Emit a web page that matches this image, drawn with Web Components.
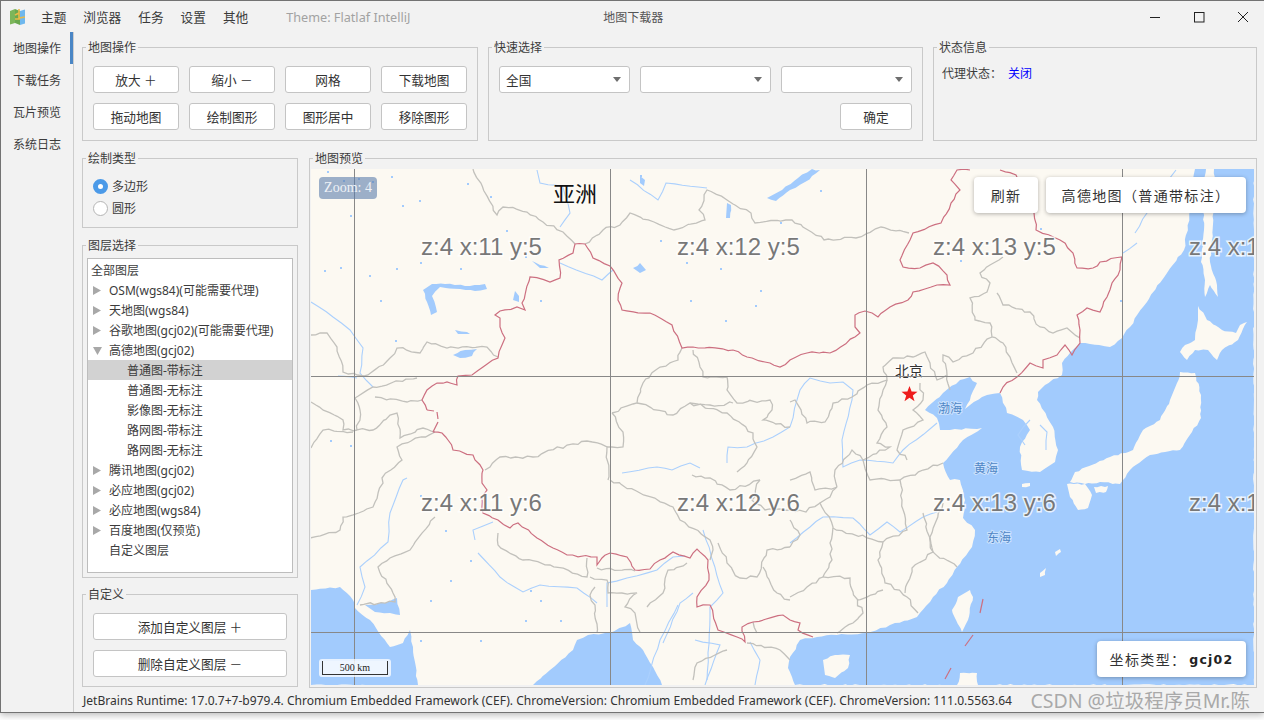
<!DOCTYPE html>
<html lang="zh">
<head>
<meta charset="utf-8">
<title>地图下载器</title>
<style>
  html, body { margin: 0; padding: 0; background: #fff; height: 100%; }
  body { font: 12.6px "Noto Sans", "Noto Sans CJK SC", sans-serif; color: #333; overflow: hidden; }
</style>
</head>
<body>
<app-window>
  <title-bar></title-bar>
  <div slot="tabs">
    <side-tab active>地图操作</side-tab>
    <side-tab>下载任务</side-tab>
    <side-tab>瓦片预览</side-tab>
    <side-tab>系统日志</side-tab>
  </div>
  <top-row slot="main">
    <group-box legend="地图操作">
      <button-grid>
        <ui-button>放大 ＋</ui-button>
        <ui-button>缩小 －</ui-button>
        <ui-button>网格</ui-button>
        <ui-button>下载地图</ui-button>
        <ui-button>拖动地图</ui-button>
        <ui-button>绘制图形</ui-button>
        <ui-button>图形居中</ui-button>
        <ui-button>移除图形</ui-button>
      </button-grid>
    </group-box>
    <group-box legend="快速选择">
      <quick-select></quick-select>
    </group-box>
    <group-box legend="状态信息" pad="9px 8px">
      <proxy-status></proxy-status>
    </group-box>
  </top-row>
  <lower-row slot="main">
    <left-column>
      <group-box legend="绘制类型" pad="8px 10px">
        <ui-radio checked>多边形</ui-radio>
        <ui-radio>圆形</ui-radio>
      </group-box>
      <group-box legend="图层选择" pad="4px" grow style="margin-top:1px">
        <layer-tree></layer-tree>
      </group-box>
      <group-box legend="自定义" pad="10px 10px 9px">
        <ui-button block>添加自定义图层 ＋</ui-button>
        <ui-button block>删除自定义图层 －</ui-button>
      </group-box>
    </left-column>
    <group-box legend="地图预览" pad="2px 2px 2px 1px" grow>
      <map-view></map-view>
    </group-box>
  </lower-row>
  <status-bar slot="main"></status-bar>
</app-window>

<script>
class AppWindow extends HTMLElement {
  constructor() {
    super();
    this.attachShadow({ mode: 'open' });
    this.shadowRoot.innerHTML = `
      <style>
        :host {
          display: flex; flex-direction: column; box-sizing: border-box;
          width: 1264px; height: 713px; background: #f2f2f2;
          border: 1px solid #737373; border-right: 0;
          box-shadow: 0 2px 7px rgba(0,0,0,.28);
        }
        .body { display: flex; flex: 1; min-height: 0; }
        .tabs { width: 72px; border-right: 1px solid #cdcdcd; flex: none; }
        .main { flex: 1; display: flex; flex-direction: column; padding: 6px 7px 0 8px; min-width: 0; }
      </style>
      <slot></slot>
      <div class="body">
        <div class="tabs"><slot name="tabs"></slot></div>
        <div class="main"><slot name="main"></slot></div>
      </div>`;
  }
}

class TitleBar extends HTMLElement {
  constructor() {
    super();
    this.attachShadow({ mode: 'open' });
    this.shadowRoot.innerHTML = `
      <style>
        :host { display: flex; align-items: center; height: 31px; flex: none; font-size: 12.67px; color: #3a3a3a; }
        svg.logo { margin: 0 16px 0 9px; flex: none; }
        .menu { display: flex; gap: 17px; }
        .theme { margin-left: 38px; color: #a2a2a2; width: 317px; }
        .title { color: #555; font-size: 12px; }
        .controls { margin-left: auto; margin-right: -1px; display: flex; }
        .controls div { width: 44px; height: 31px; display: flex; align-items: center; justify-content: center; }
      </style>
      <svg class="logo" width="15" height="16" viewBox="0 0 15 16">
        <path d="M0 2 5 0V14L0 15.5Z" fill="#7cb65a"/>
        <path d="M5 0 10 2V16L5 14Z" fill="#6aa84f"/>
        <path d="M10 2 15 .5V14.5L10 16Z" fill="#6fb8ee"/>
        <path d="M5 6 9 4M9 0V9L15 8M5 10H10" stroke="#e9b949" stroke-width="1.6" fill="none"/>
      </svg>
      <div class="menu"><span>主题</span><span>浏览器</span><span>任务</span><span>设置</span><span>其他</span></div>
      <div class="theme">Theme: Flatlaf IntelliJ</div>
      <div class="title">地图下载器</div>
      <div class="controls">
        <div><svg width="12" height="12" viewBox="0 0 12 12"><path d="M1 6.5H11" stroke="#222" fill="none"/></svg></div>
        <div><svg width="12" height="12" viewBox="0 0 12 12"><rect x="1.5" y="1.5" width="9.5" height="9.5" stroke="#222" fill="none"/></svg></div>
        <div><svg width="12" height="12" viewBox="0 0 12 12"><path d="M1 1 11 11M11 1 1 11" stroke="#222" fill="none"/></svg></div>
      </div>`;
  }
}

class SideTab extends HTMLElement {
  constructor() {
    super();
    this.attachShadow({ mode: 'open' });
    this.shadowRoot.innerHTML = `
      <style>
        :host { display: flex; align-items: center; justify-content: center; height: 32px; box-sizing: border-box; font-size: 12px; color: #3c3c3c; padding-right: 0; }
        :host([active]) { box-shadow: inset -3px 0 0 #4a86c5; }
      </style>
      <slot></slot>`;
  }
}

class GroupBox extends HTMLElement {
  constructor() {
    super();
    this.attachShadow({ mode: 'open' });
    const pad = this.getAttribute('pad') || '10px';
    const parts = pad.split(' ');
    const padLeft = parseInt(parts[3] || parts[1] || parts[0]);
    this.shadowRoot.innerHTML = `
      <style>
        :host { display: block; min-width: 0; }
        :host([grow]) { flex: 1; min-height: 0; }
        fieldset {
          margin: 0; height: 100%; box-sizing: border-box; min-width: 0;
          border: 1px solid #c9c9c9; padding: ${pad}; display: flex; flex-direction: column;
        }
        legend {
          font-size: 12px; height: 18px; line-height: 20px; color: #3c3c3c; padding: 0 2px;
          margin-left: ${3 - padLeft}px;
        }
      </style>
      <fieldset>
        <legend>${this.getAttribute('legend')}</legend>
        <slot></slot>
      </fieldset>`;
  }
}

class TopRow extends HTMLElement {
  constructor() {
    super();
    this.attachShadow({ mode: 'open' });
    this.shadowRoot.innerHTML = `
      <style>:host { display: grid; grid-template-columns: 396px 435px 324px; column-gap: 10px; height: 103px; flex: none; }</style>
      <slot></slot>`;
  }
}

class LowerRow extends HTMLElement {
  constructor() {
    super();
    this.attachShadow({ mode: 'open' });
    this.shadowRoot.innerHTML = `
      <style>:host { display: flex; gap: 11px; height: 539px; margin-top: 8px; flex: none; }</style>
      <slot></slot>`;
  }
}

class LeftColumn extends HTMLElement {
  constructor() {
    super();
    this.attachShadow({ mode: 'open' });
    this.shadowRoot.innerHTML = `
      <style>:host { display: flex; flex-direction: column; gap: 7px; width: 216px; height: 538px; flex: none; }</style>
      <slot></slot>`;
  }
}

class ButtonGrid extends HTMLElement {
  constructor() {
    super();
    this.attachShadow({ mode: 'open' });
    this.shadowRoot.innerHTML = `
      <style>:host { display: grid; grid-template-columns: repeat(4, 86px); gap: 10px; }</style>
      <slot></slot>`;
  }
}

class UiButton extends HTMLElement {
  constructor() {
    super();
    this.attachShadow({ mode: 'open' });
    this.shadowRoot.innerHTML = `
      <style>
        :host {
          display: flex; align-items: center; justify-content: center; box-sizing: border-box;
          height: 27px; background: #fff; border: 1px solid #c4c4c4; border-radius: 3px;
          font-size: 12.67px; color: #333; flex: none;
        }
        :host([block]) { margin-bottom: 10px; }
        :host([block]:last-child) { margin-bottom: 0; }
      </style>
      <slot></slot>`;
  }
}

class UiCombo extends HTMLElement {
  constructor() {
    super();
    this.attachShadow({ mode: 'open' });
    this.shadowRoot.innerHTML = `
      <style>
        :host {
          display: flex; align-items: center; justify-content: space-between; box-sizing: border-box;
          height: 27px; background: #fff; border: 1px solid #c4c4c4; border-radius: 3px;
          font-size: 12.67px; color: #333; padding: 0 8px 0 6px;
        }
        i { width: 0; height: 0; border: solid transparent; border-width: 5px 4.5px 0; border-top-color: #6e6e6e; }
      </style>
      <span><slot></slot></span><i></i>`;
  }
}

class QuickSelect extends HTMLElement {
  constructor() {
    super();
    this.attachShadow({ mode: 'open' });
    this.shadowRoot.innerHTML = `
      <style>
        :host { display: grid; grid-template-columns: repeat(3, 131px); gap: 10px; }
        ui-button { grid-column: 3; justify-self: end; width: 72px; }
      </style>
      <ui-combo>全国</ui-combo><ui-combo></ui-combo><ui-combo></ui-combo>
      <ui-button>确定</ui-button>`;
  }
}

class ProxyStatus extends HTMLElement {
  constructor() {
    super();
    this.attachShadow({ mode: 'open' });
    this.shadowRoot.innerHTML = `
      <style>
        :host { display: flex; font-size: 12px; line-height: 18px; color: #3c3c3c; }
        b { font-weight: normal; color: #0000ff; margin-left: 6px; }
      </style>
      <span>代理状态：</span><b>关闭</b>`;
  }
}

class UiRadio extends HTMLElement {
  constructor() {
    super();
    this.attachShadow({ mode: 'open' });
    this.shadowRoot.innerHTML = `
      <style>
        :host { display: flex; align-items: center; gap: 4px; height: 22px; font-size: 12px; color: #3c3c3c; }
        i { box-sizing: border-box; width: 15px; height: 15px; border-radius: 50%; background: #fff; border: 1px solid #b5b5b5; flex: none; }
        :host([checked]) i { background: #fff; border: 5px solid #4b9ae8; }
      </style>
      <i></i><slot></slot>`;
  }
}

class LayerTree extends HTMLElement {
  constructor() {
    super();
    this.attachShadow({ mode: 'open' });
    const rows = [
      [0, '', '全部图层'],
      [1, 'r', 'OSM(wgs84)(可能需要代理)'],
      [1, 'r', '天地图(wgs84)'],
      [1, 'r', '谷歌地图(gcj02)(可能需要代理)'],
      [1, 'd', '高德地图(gcj02)'],
      [2, '', '普通图-带标注', true],
      [2, '', '普通图-无标注'],
      [2, '', '影像图-无标注'],
      [2, '', '路网图-带标注'],
      [2, '', '路网图-无标注'],
      [1, 'r', '腾讯地图(gcj02)'],
      [1, 'r', '必应地图(gcj02)'],
      [1, 'r', '必应地图(wgs84)'],
      [1, 'r', '百度地图(仅预览)'],
      [1, '', '自定义图层']
    ];
    const left = [3, 21, 39];
    this.shadowRoot.innerHTML = `
      <style>
        :host { display: block; flex: 1; box-sizing: border-box; background: #fff; border: 1px solid #bdbdbd; padding-top: 1px; min-height: 0; }
        .row { display: flex; align-items: center; height: 20px; font-size: 12px; color: #3c3c3c; position: relative; white-space: nowrap; }
        .sel { background: #d2d2d2; }
        svg { position: absolute; left: 5px; top: 6px; }
      </style>
      ${rows.map(r => `
        <div class="row${r[3] ? ' sel' : ''}" style="padding-left:${left[r[0]]}px">
          ${r[1] === 'r' ? '<svg width="9" height="9" viewBox="0 0 9 9"><path d="M0 0 8 4.5 0 9Z" fill="#a8a8a8"/></svg>' : ''}
          ${r[1] === 'd' ? '<svg width="9" height="9" viewBox="0 0 9 9"><path d="M0 1H9L4.5 9Z" fill="#a8a8a8"/></svg>' : ''}
          <span>${r[2]}</span>
        </div>`).join('')}`;
  }
}

// map data, screen coordinates
const WATER = [
  // Pacific, Yellow Sea, East China Sea
  '1195,169 1190,210 1184,250 1167,273 1143,307 1130,327 1122,338 1110,347 1090,344 1080,343 1070,353 1062,363 1062,375 1045,385 1038,392 1037,400 1053,427 1058,450 1055,462 1040,472 1022,470 1020,447 1030,430 1023,420 1007,413 1000,393 987,395 970,405 965,409 977,383 970,377 960,380 943,393 925,410 937,418 940,430 982,428 963,440 943,463 950,480 960,480 965,500 963,518 975,530 972,547 957,567 947,583 933,597 917,617 890,625 867,633 837,635 817,637 800,640 790,657 788,668 795,685 1254,685 1254,169',
  // Bay of Bengal
  '533,685 550,670 573,650 577,640 588,635 610,633 630,623 633,640 643,650 653,667 662,685',
  // Arabian Sea
  '311,590 340,587 353,600 355,608 370,620 390,647 403,643 410,630 413,647 418,685 311,685',
  // Gulf of Kutch
  '365,605 385,603 397,598 400,615 390,613 375,612',
  // Balkhash
  '423,290 427,302 431,315 437,312 432,296 440,287 460,289 475,291 487,289 485,284 470,286 445,284 432,284',
  // Issyk-Kul
  '453,355 465,350 477,349 472,356 460,358',
  // Baikal
  '767,198 776,201 790,190 805,182 820,170 812,169 798,178 782,190',
  // Hovsgol, Zaysan and small lakes
  '727,203 731,205 730,218 726,218',
  '515,291 519,296 519,302 513,300',
  '532,261 540,265 549,268 540,268',
  '455,330 467,332 470,334 458,334',
  '640,176 645,180 644,186 640,183',
  '633,268 640,263 646,270 640,273'
];
const LAND = [
  '1206,169 1203,200 1204,230 1201,262 1205,280 1205,297 1210,285 1218,297 1217,285 1210,262 1212,240 1214,200 1214,169',
  '1198,306 1207,320 1222,330 1236,333 1240,325 1247,322 1238,340 1222,350 1217,360 1208,350 1195,350 1187,360 1180,352 1185,345 1195,340 1198,320',
  '1177,383 1180,372 1195,373 1201,395 1201,418 1192,432 1180,450 1165,452 1150,455 1130,470 1120,484 1100,482 1085,484 1070,482 1075,472 1110,457 1133,450 1143,430 1160,420 1170,400',
  '1067,484 1085,484 1092,495 1088,508 1078,510 1070,497',
  '1094,487 1108,486 1106,492 1096,493',
  '970,590 973,597 968,620 962,632 956,620 952,610 958,597',
  '823,660 835,655 850,655 848,668 835,678 825,675',
  '957,685 960,673 977,673 978,685',
  '1022,484 1030,483 1030,486 1022,487',
  '1055,552 1060,549 1061,552 1056,556',
  '1040,573 1046,568 1045,575 1040,577'
];
const BORDER = [
  '482,473 483,470 475,460 473,455 453,450 448,440 442,433 433,432',
  '427,410 422,400 427,390 437,383 447,382 457,385 458,376 472,375 483,367 498,358 502,345 505,338 500,327 500,318 495,315 500,311 517,307 525,310 522,303 530,277 550,282 560,278 559,260 573,253 575,244 585,244 593,258 610,266 622,283 618,300 622,310 650,313 672,325 682,348 693,347 733,350 747,357 770,363 780,367 790,360 807,353 830,353 860,333 855,327 855,315 865,311 878,317 890,307 908,300 913,292 937,285 950,285 947,275 933,263 920,268 903,267 900,260 910,240 913,233 941,223 951,203 960,190 951,180 957,170 970,170',
  '1000,170 1016,175 1024,190 1034,213 1036,230 1060,240 1073,253 1077,268 1093,268 1100,262 1122,257 1120,270 1112,283 1107,297 1100,312 1087,308 1077,315 1080,330 1080,343 1072,355 1065,345 1057,355 1043,360 1043,368 1030,363 1017,377 1003,387 1000,393',
  '482,473 482,483 487,490 482,497 483,513 498,520 510,528 518,523 537,538 553,548 567,555 597,557 597,565 602,558 610,553 627,557 635,570 650,569 660,560 673,552 690,558 697,549 708,560 709,580 697,597 697,607 710,605 718,630 737,637 745,642 742,627 753,622 783,615 790,620 800,623 798,630 813,637'
];
// disputed and dashed pieces stay straight
const DASH = ['433,432 438,422', '438,419 437,412', '434,411 427,410', '983,599 980,613', '973,635 965,646', '951,668 945,679'];
const GRAY = [
  '473,169 497,215 503,207 527,212 543,222 563,232 575,244',
  '585,244 603,230 620,225 630,213 654,222 674,230 705,220 699,210 707,190 727,200 751,213 755,223 792,220 808,230 824,240 856,238 881,227 909,233',
  '311,335 327,333 337,347 343,372 368,375 390,358 397,348 420,353 427,342 447,348 487,347 498,357',
  '355,398 360,410 357,430 373,430 390,415 397,413 400,438 423,428 435,432',
  '355,398 373,387 417,378', '375,397 407,402 422,400',
  '435,432 397,447 402,460 382,478 383,483 373,507 343,517 340,530 310,538',
  '311,448 323,430 353,432', '311,402 343,420 343,430 357,430',
  '435,517 410,550 390,558 378,567 393,593 395,602 360,605',
  '485,470 500,457 533,457 567,445 587,441 607,447 608,480',
  '612,413 623,432 623,447 607,447',
  '612,413 637,403 643,383 660,367 678,360 682,348',
  '637,403 673,415 690,403 710,405 733,403',
  '693,350 700,367 703,377 727,377 727,390 737,403 770,400 772,410 763,420 790,427',
  '690,403 727,413 753,433 757,447 747,463 737,472',
  '1003,257 980,273 990,283 987,292 970,298 975,320 990,323 992,337 1003,343 1010,357 1017,373',
  '997,293 1003,305 1030,312 1040,327 1053,333 1067,328 1080,338',
  '992,337 973,353 953,362 943,355 947,375 937,380 930,363 925,352 913,357 893,358 883,367 887,380 867,385 852,397 833,403 825,422 807,423 795,400 790,402',
  '920,383 923,400 913,410 923,420 903,430 897,450 907,460',
  '887,380 878,410 887,427 877,443 890,447 863,460 852,450 835,470 837,487',
  '947,375 950,390',
  '837,487 830,497 820,503 833,527 830,543 832,560 823,577 850,578 853,592 863,613 853,623 837,633',
  '900,480 902,500 907,530 883,542 878,560 885,583 907,597 918,613',
  '923,513 933,552 912,568 905,593',
  '833,528 867,538 883,542', '790,597 807,587 823,577', '857,600 883,590',
  '943,503 930,537 933,552 957,567', '900,480 923,470 943,463', '863,460 870,480 900,480',
  '790,480 810,472 815,490 837,487', '790,510 806,512 820,503',
  '498,533 498,545 523,560 550,565 587,577 587,558', '597,568 635,571',
  '590,577 607,580 608,593 637,593 625,607 635,613 640,632',
  '647,607 663,593 668,570 687,563', '595,587 590,595 595,605 597,633',
  '727,650 697,663 693,680', '747,643 780,650 790,660', '753,622 757,633',
  '610,480 640,493 673,507 680,520 710,540 713,550 710,560',
  '718,543 727,563 740,578 757,577 767,550 790,547',
  '763,567 777,593 790,600', '790,547 800,535 790,520', '760,480 752,500 765,510 790,510',
  '692,475 710,478 730,490 760,480'
];
const RIVER = [
  '311,302 333,317 350,330 363,348 360,373 373,387',
  '338,376 352,377 357,378',
  '407,478 403,480 390,513 388,542 360,567 365,587 357,605',
  '478,553 500,577 523,592 540,585 577,588 597,603',
  '607,607 607,583 627,578 657,570 673,557 685,556',
  '475,540 473,530 493,522',
  '703,530 723,593 710,607 707,680', '663,643 680,603 693,593',
  '622,473 657,467 672,470 690,463 700,468',
  '727,463 728,447 747,447 773,437 790,427 800,390 810,378 830,383 843,382 853,390 852,400 842,440 843,467 860,460 893,463 903,450 937,423',
  '790,543 810,527 823,517 853,518 870,535 887,522 900,532 923,517 937,512',
  '630,180 658,200 666,183 707,188',
  '537,170 540,183 563,187 570,213 560,227',
  '560,263 602,280 613,270',
  '1135,233 1147,213 1160,190 1176,170',
  '1123,253 1137,243',
  '1030,420 1018,435 1025,445', '1040,425 1047,432 1046,450',
  '645,685 660,640 678,605',
  '695,640 720,645 705,685', '750,642 760,660 755,685'
];
const DOTS = [
  '327,171','343,180','358,178','372,181','391,176','419,200','402,205','350,215','324,270','340,267','369,275','396,268','420,262','467,183','490,196','506,230','525,256',
  '540,300','460,268','380,300','395,340','330,440','350,445','420,495','445,530','470,560','530,590','540,600','525,620','450,580','430,600','420,640','640,175','660,240',
  '686,262','720,268','760,290','755,305','725,320','690,300','780,222','820,190','960,260','1040,228','1120,300','560,620','480,640','1220,360','1030,497','1070,570','1000,600','1000,590'
];

// breaks a polyline into short wobbly steps so it reads like a traced border
function rough(str, amp, step) {
  const pts = str.split(' ').map(p => p.split(',').map(Number));
  const wob = (x, y) => {
    const s = Math.sin(x * 12.9898 + y * 78.233) * 43758.5453;
    return (s - Math.floor(s) - 0.5) * 2 * amp;
  };
  const out = [pts[0]];
  for (let i = 1; i < pts.length; i++) {
    const [ax, ay] = pts[i - 1], [bx, by] = pts[i];
    const n = Math.max(1, Math.round(Math.hypot(bx - ax, by - ay) / step));
    for (let j = 1; j <= n; j++) {
      const x = ax + (bx - ax) * j / n, y = ay + (by - ay) * j / n;
      out.push(j === n ? [x, y] : [x + wob(x, y), y + wob(y, x)]);
    }
  }
  return out.map(p => p[0].toFixed(1) + ',' + p[1].toFixed(1)).join(' ');
}
const lines = (list, attrs, amp, step) =>
  list.map(p => `<polyline points="${amp ? rough(p, amp, step) : p}" fill="none" ${attrs}/>`).join('');
const fills = (list, color, amp, step) =>
  list.map(p => `<polygon points="${rough(p, amp, step)}" fill="${color}"/>`).join('');

class MapView extends HTMLElement {
  constructor() {
    super();
    this.attachShadow({ mode: 'open' });
    const tiles = [];
    for (const [ty, y] of [[5, 255], [6, 511]]) {
      for (const [tx, x] of [[11, 421], [12, 677], [13, 933], [14, 1189]]) {
        tiles.push(`<text class="tile" x="${x}" y="${y}">z:4 x:${tx} y:${ty}</text>`);
      }
    }
    this.shadowRoot.innerHTML = `
      <style>
        :host { display: block; flex: 1; position: relative; overflow: hidden; min-height: 0; background: #fcf9f2; }
        svg.map { display: block; width: 943px; height: 516px; }
        .tile { font: 24px "Liberation Sans", Arial, sans-serif; fill: #787878; stroke: #fff; stroke-width: 3px; stroke-opacity: .75; paint-order: stroke; }
        .sea { font: 12px "Noto Sans CJK SC", sans-serif; fill: #4f86c6; stroke: #fff; stroke-width: 2px; stroke-opacity: .45; paint-order: stroke; }
        .city { font: 14px "Noto Sans CJK SC", sans-serif; fill: #333; stroke: #fff; stroke-width: 2.5px; stroke-opacity: .8; paint-order: stroke; }
        .card {
          position: absolute; display: flex; align-items: center; justify-content: center; height: 36px; box-sizing: border-box;
          background: #fff; border-radius: 4px; box-shadow: 0 1px 4px rgba(0,0,0,.3);
          font: 14px "Noto Sans CJK SC", sans-serif; letter-spacing: 1.35px; color: #333;
        }
        .card b { font: bold 12.5px "DejaVu Sans", "Noto Sans", sans-serif; letter-spacing: 1.2px; color: #222; margin-left: 3px; }
        .zoom {
          position: absolute; left: 8px; top: 8px; width: 58px; height: 22px; border-radius: 4px;
          background: rgba(92,125,172,.6); color: #eef2f7; font: 14px "Liberation Serif", serif;
          display: flex; align-items: center; justify-content: center;
        }
        .continent { position: absolute; left: 242px; top: 7px; font: 22px "Noto Sans CJK SC", sans-serif; color: #111; text-shadow: 0 0 2px #fff; }
        .scale {
          position: absolute; left: 8px; bottom: 8px; width: 72px; height: 18px; box-sizing: border-box; padding: 2px 3px;
          background: rgba(255,255,255,.75); border-radius: 3px;
        }
        .scale div {
          height: 14px; box-sizing: border-box; border: 1px solid #333; border-top: 0; text-align: center;
          font: 10px/13px "Liberation Serif", serif; color: #222; background: rgba(255,255,255,.3);
        }
      </style>
      <svg class="map" viewBox="311 169 943 516" xmlns="http://www.w3.org/2000/svg">
        <rect x="311" y="169" width="943" height="516" fill="#fcf9f2"/>
        ${fills(WATER, '#a2cbfd', 0.9, 5)}
        ${fills(LAND, '#fcf9f2', 0.8, 4)}
        ${DOTS.map(p => { const [x, y] = p.split(','); return `<rect x="${x}" y="${y}" width="2" height="2" fill="#a2cbfd"/>`; }).join('')}
        ${lines(RIVER, 'stroke="#abd0fd" stroke-width="1.1"', 0.7, 9)}
        ${lines(GRAY, 'stroke="#c2c1bc" stroke-width="1.3"', 1.5, 5)}
        ${lines(BORDER, 'stroke="#cc6f80" stroke-width="1.2"', 1.1, 6)}
        ${lines(DASH, 'stroke="#cc6f80" stroke-width="1.2"')}
        <text class="city" x="895" y="376">北京</text>
        <polygon points="909.5,386 911.6,391.6 917.5,391.8 912.8,395.4 914.5,401.2 909.5,397.8 904.5,401.2 906.2,395.4 901.5,391.8 907.4,391.6" fill="#ee1c1c"/>
        <text class="sea" x="938" y="413">渤海</text>
        <text class="sea" x="974" y="473">黄海</text>
        <text class="sea" x="987" y="542">东海</text>
        <path d="M354.5 169V685M610.5 169V685M866.5 169V685M1122.5 169V685M311 376.5H1254M311 632.5H1254" stroke="#888" stroke-width="1" fill="none"/>
        ${tiles.join('')}
      </svg>
      <div class="zoom">Zoom: 4</div>
      <div class="continent">亚洲</div>
      <div class="card" style="left:663px;top:8px;width:64px">刷新</div>
      <div class="card" style="left:735px;top:8px;width:200px">高德地图（普通带标注）</div>
      <div class="card" style="left:786px;bottom:8px;width:149px">坐标类型：<b>gcj02</b></div>
      <div class="scale"><div>500 km</div></div>`;
  }
}

class StatusBar extends HTMLElement {
  constructor() {
    super();
    this.attachShadow({ mode: 'open' });
    this.shadowRoot.innerHTML = `
      <style>
        :host { display: flex; align-items: center; flex: 1; font-size: 12.07px; color: #333; white-space: nowrap; padding: 1px 0 0 1px; justify-content: space-between; }
        .mark { font-size: 19.5px; line-height: 1; color: #a9a9a9; margin-right: 7px; }
      </style>
      <span>JetBrains Runtime: 17.0.7+7-b979.4. Chromium Embedded Framework (CEF). ChromeVersion: Chromium Embedded Framework (CEF). ChromeVersion: 111.0.5563.64</span>
      <span class="mark">CSDN @垃圾程序员Mr.陈</span>`;
  }
}

customElements.define('app-window', AppWindow);
customElements.define('title-bar', TitleBar);
customElements.define('side-tab', SideTab);
customElements.define('group-box', GroupBox);
customElements.define('top-row', TopRow);
customElements.define('lower-row', LowerRow);
customElements.define('left-column', LeftColumn);
customElements.define('button-grid', ButtonGrid);
customElements.define('ui-button', UiButton);
customElements.define('ui-combo', UiCombo);
customElements.define('quick-select', QuickSelect);
customElements.define('proxy-status', ProxyStatus);
customElements.define('ui-radio', UiRadio);
customElements.define('layer-tree', LayerTree);
customElements.define('map-view', MapView);
customElements.define('status-bar', StatusBar);
</script>
</body>
</html>
